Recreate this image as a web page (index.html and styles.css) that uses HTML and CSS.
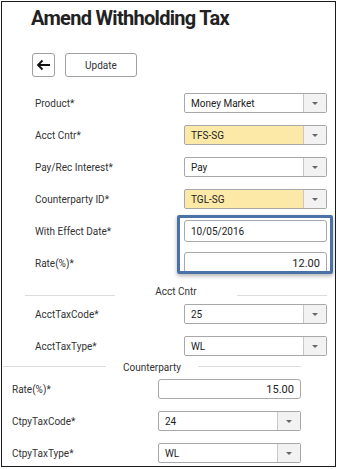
FILE: index.html
```html
<!DOCTYPE html>
<html lang="en">
<head>
    <meta charset="UTF-8">
    <title>Amend Withholding Tax</title>
    <link rel="stylesheet" href="styles.css">
</head>
<body>
    <div class="frame">
        <h1 class="page-title">Amend Withholding Tax</h1>

        <div class="toolbar">
            <button class="icon-btn" aria-label="Back">
                <svg width="15" height="12" viewBox="0 0 15 12">
                    <path d="M14 6H2M6.5 1.5L2 6l4.5 4.5" fill="none" stroke="#111" stroke-width="1.8"/>
                </svg>
            </button>
            <button class="btn">Update</button>
        </div>

        <div class="form main-form">
            <div class="row">
                <label>Product*</label>
                <div class="select"><span class="value">Money Market</span><span class="caret-box"></span></div>
            </div>
            <div class="row">
                <label>Acct Cntr*</label>
                <div class="select select-required"><span class="value">TFS-SG</span><span class="caret-box"></span></div>
            </div>
            <div class="row">
                <label>Pay/Rec Interest*</label>
                <div class="select"><span class="value">Pay</span><span class="caret-box"></span></div>
            </div>
            <div class="row">
                <label>Counterparty ID*</label>
                <div class="select select-required"><span class="value">TGL-SG</span><span class="caret-box"></span></div>
            </div>
            <div class="row">
                <label>With Effect Date*</label>
                <div class="input input-tall">10/05/2016</div>
            </div>
            <div class="row">
                <label>Rate(%)*</label>
                <div class="input input-tall input-number">12.00</div>
            </div>

            <div class="section-head acct-head">
                <span class="rule"></span><span class="section-title">Acct Cntr</span><span class="rule"></span>
            </div>

            <div class="row">
                <label>AcctTaxCode*</label>
                <div class="select"><span class="value">25</span><span class="caret-box"></span></div>
            </div>
            <div class="row">
                <label>AcctTaxType*</label>
                <div class="select"><span class="value">WL</span><span class="caret-box"></span></div>
            </div>
        </div>

        <div class="form ctpy-form">
            <div class="section-head ctpy-head">
                <span class="rule"></span><span class="section-title">Counterparty</span><span class="rule"></span>
            </div>
            <div class="row">
                <label>Rate(%)*</label>
                <div class="input input-number">15.00</div>
            </div>
            <div class="row">
                <label>CtpyTaxCode*</label>
                <div class="select"><span class="value">24</span><span class="caret-box"></span></div>
            </div>
            <div class="row">
                <label>CtpyTaxType*</label>
                <div class="select"><span class="value">WL</span><span class="caret-box"></span></div>
            </div>
        </div>

        <!-- annotation box over the date / rate fields -->
        <div class="highlight"></div>
    </div>
</body>
</html>
```

FILE: styles.css
```css
:root {
    --text-color: #333;
    --border-color: #a8a8a8;
    --required-bg: #fce9a7;
    --highlight-color: #4a72a6;
}

body {
    margin: 0;
    padding: 0;
    background: #fff;
    font-family: Roboto, "Liberation Sans", sans-serif;
    color: var(--text-color);
}

.frame {
    position: relative;
    box-sizing: border-box;
    width: 335px;
    height: 466px;
    margin: 1px 0 0 1px;
    border: 1px solid #1b1b1b;
    overflow: hidden;
}

.page-title {
    margin: 0;
    padding: 4px 0 0 29px;
    font-size: 20px;
    line-height: 24px;
    font-weight: bold;
    letter-spacing: -0.7px;
    color: #222;
}

/* Toolbar */
.toolbar {
    display: flex;
    gap: 10px;
    padding: 23px 0 0 30px;
}

.icon-btn,
.btn {
    box-sizing: border-box;
    height: 24px;
    background: #fff;
    border: 1px solid #a0a0a0;
    border-radius: 3px;
    font-family: inherit;
    padding: 0;
}

.icon-btn {
    width: 23px;
    display: flex;
    align-items: center;
    justify-content: center;
}

.btn {
    width: 72px;
    font-size: 10px;
    color: #333;
}

/* Form rows */
.form {
    display: flex;
    flex-direction: column;
}

.main-form {
    padding: 10px 8px 0 33px;
}

.ctpy-form {
    padding: 0 34px 0 1px;
}

.ctpy-form .row {
    padding-left: 9px;
}

.row {
    display: flex;
    align-items: center;
    height: 32px;
}

.row label {
    flex: 1;
    font-size: 10px;
    color: #333;
}

.select,
.input {
    box-sizing: border-box;
    width: 143px;
    height: 20px;
    border: 1px solid var(--border-color);
    border-radius: 2px;
    background: #fff;
    font-size: 10px;
    color: #222;
}

.select {
    display: flex;
    align-items: center;
}

.select-required {
    background: var(--required-bg);
}

.value {
    flex: 1;
    padding-left: 6px;
}

.caret-box {
    position: relative;
    width: 22px;
    height: 100%;
    border-left: 1px solid #c8c8c8;
    background: #f2f2f2;
}

.caret-box::after {
    content: "";
    position: absolute;
    left: 8px;
    top: 8px;
    border-left: 3px solid transparent;
    border-right: 3px solid transparent;
    border-top: 3px solid #666;
}

.input {
    display: flex;
    align-items: center;
    padding: 0 6px;
    border-radius: 3px;
}

.input-tall {
    height: 22px;
}

.input-number {
    justify-content: flex-end;
    font-size: 11px;
}

/* Section headings */
.section-head {
    display: flex;
    align-items: center;
    font-size: 10px;
    line-height: 12px;
    color: #333;
}

.rule {
    flex: 1;
    border-top: 1px solid #dcdcdc;
}

.acct-head {
    box-sizing: border-box;
    height: 19px;
    margin-left: -10px;
    padding-top: 7px;
}

.acct-head .rule {
    margin-top: 6px;
}

.acct-head .section-title {
    padding: 0 40px;
}

.ctpy-head {
    height: 11px;
}

.ctpy-head .rule {
    margin-top: -2px;
}

.ctpy-head .section-title {
    padding: 0 17px;
}

/* Annotation overlay */
.highlight {
    position: absolute;
    left: 175px;
    top: 213px;
    width: 156px;
    height: 59px;
    box-sizing: border-box;
    border: 3px solid var(--highlight-color);
    border-radius: 2px;
    box-shadow: 0 2px 4px rgba(0, 0, 0, 0.3);
}
```
